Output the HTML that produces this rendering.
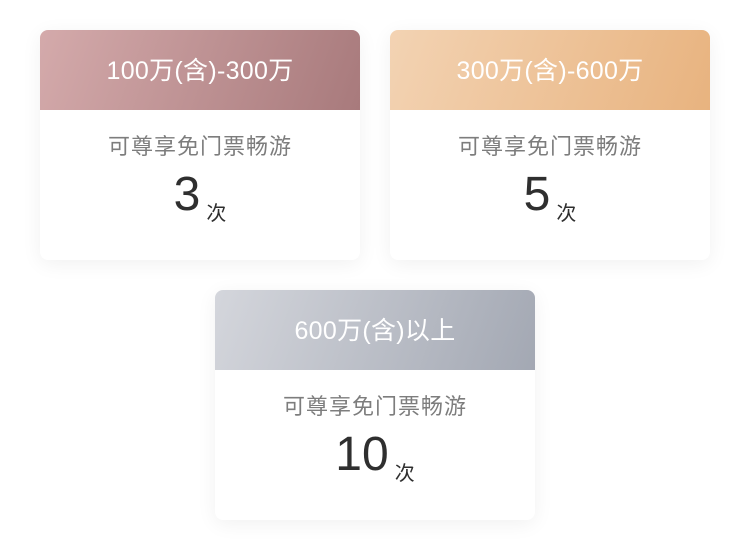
<!DOCTYPE html>
<html><head><meta charset="utf-8"><style>
html,body{margin:0;padding:0;background:#fff;width:750px;height:550px;overflow:hidden;font-family:"Liberation Sans","Noto Sans CJK SC",sans-serif}
.c{position:absolute;width:320px;height:230px;background:#fff;border-radius:8px;box-shadow:0 4px 20px rgba(0,0,0,0.06);overflow:hidden}
.h{height:80px;line-height:82px;text-align:center;color:#fff;font-size:25px;letter-spacing:0.3px}
.s{text-align:center;color:#7d7d7d;font-size:22px;letter-spacing:1px;margin-top:22px;line-height:30px}
.n{text-align:center;color:#2f2f2f;margin-top:3px;line-height:60px;height:60px}
.n b{font-weight:normal;font-size:48px}
.n i{font-style:normal;font-size:20px;margin-left:6px;vertical-align:-10px}
</style></head><body>
<div class="c" style="left:40px;top:30px"><div class="h" style="background:linear-gradient(110deg,#d4aaab,#a87a7c)">100万(含)-300万</div><div class="s">可尊享免门票畅游</div><div class="n"><b>3</b><i>次</i></div></div>
<div class="c" style="left:390px;top:30px"><div class="h" style="background:linear-gradient(110deg,#f3d3b3,#e8b37f)">300万(含)-600万</div><div class="s">可尊享免门票畅游</div><div class="n"><b>5</b><i>次</i></div></div>
<div class="c" style="left:215px;top:290px"><div class="h" style="background:linear-gradient(110deg,#d4d6dc,#a3a8b3)">600万(含)以上</div><div class="s">可尊享免门票畅游</div><div class="n"><b>10</b><i>次</i></div></div>
</body></html>
